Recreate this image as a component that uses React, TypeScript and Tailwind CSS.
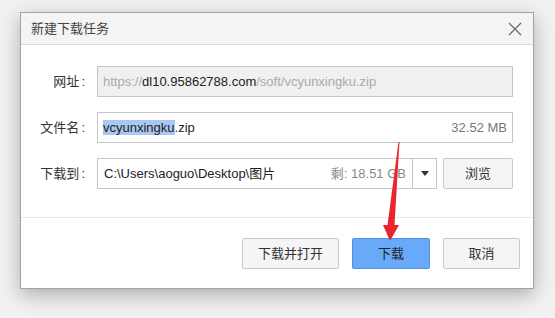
const font = { fontFamily: '"Liberation Sans", "Noto Sans CJK SC", sans-serif' };

const Label = ({ text }: { text: string }) => (
   <div className="w-[64px] text-right text-[13px] text-[#333] shrink-0">
      {text}
      <span className="ml-[2px]">:</span>
   </div>
);

const App = () => {
   return (
      <div className="w-[555px] h-[318px] bg-[#f1f1f1] pt-[12px] pl-[20px] relative overflow-hidden" style={font}>
         <div className="w-[514px] h-[277px] bg-white border border-[#a3a3a3] shadow-[0_6px_18px_rgba(0,0,0,0.28)] flex flex-col">
            <div className="h-[32px] bg-[#f4f4f4] border-b border-[#d8d8d8] flex items-center justify-between pl-[10px] pr-[10px]">
               <span className="text-[13px] text-[#444]">新建下载任务</span>
               <svg width="14" height="14" viewBox="0 0 14 14" className="mr-[1px]">
                  <path d="M1 1 L13 13 M13 1 L1 13" stroke="#666" strokeWidth="1.2" fill="none" />
               </svg>
            </div>

            <div className="flex flex-col gap-[15px] mt-[21px]">
               <div className="flex items-center h-[31px]">
                  <Label text="网址" />
                  <div className="ml-[12px] w-[416px] h-full bg-[#f0f0f0] border border-[#c6c6c6] flex items-center px-[5px] text-[13px] text-[#aaa] whitespace-nowrap">
                     https://<span className="text-[#222]">dl10.95862788.com</span>/soft/vcyunxingku.zip
                  </div>
               </div>
               <div className="flex items-center h-[31px]">
                  <Label text="文件名" />
                  <div className="ml-[12px] w-[416px] h-full bg-white border border-[#c6c6c6] flex items-center justify-between px-[5px] text-[13px] text-[#222]">
                     <span>
                        <span className="bg-[#a8c8f2]">vcyunxingku</span>.zip
                     </span>
                     <span className="text-[#777]">32.52 MB</span>
                  </div>
               </div>
               <div className="flex items-center h-[31px]">
                  <Label text="下载到" />
                  <div className="ml-[12px] w-[340px] h-full bg-white border border-[#c6c6c6] flex">
                     <div className="flex-1 flex items-center justify-between px-[6px] text-[13px] text-[#222]">
                        <span>C:\Users\aoguo\Desktop\图片</span>
                        <span className="text-[#888]">剩: 18.51 GB</span>
                     </div>
                     <div className="w-[24px] border-l border-[#c6c6c6] flex items-center justify-center">
                        <svg width="8" height="5" viewBox="0 0 8 5">
                           <path d="M0 0 L8 0 L4 5 Z" fill="#333" />
                        </svg>
                     </div>
                  </div>
                  <button className="ml-[6px] w-[70px] h-[31px] bg-[#f5f5f5] border border-[#cacaca] rounded-[2px] text-[13px] text-[#333]">浏览</button>
               </div>
            </div>

            <div className="mt-[28px] border-t border-[#e6e6e6]" />

            <div className="flex justify-end gap-[13px] mt-[20px] pr-[13px]">
               <button className="w-[97px] h-[31px] bg-[#f5f5f5] border border-[#c9c9c9] rounded-[2px] text-[13px] text-[#333]">下载并打开</button>
               <button className="w-[78px] h-[31px] bg-[#68a9f8] border border-[#4d92e6] rounded-[2px] text-[13px] text-[#222]">下载</button>
               <button className="w-[77px] h-[31px] bg-[#f5f5f5] border border-[#c9c9c9] rounded-[2px] text-[13px] text-[#333]">取消</button>
            </div>
         </div>

         <svg className="absolute left-0 top-0" width="555" height="318" viewBox="0 0 555 318">
            <path d="M398.5 142 L399.5 142 L394.5 225 L399 225 L390 241 L383 225 L387.5 225 Z" fill="#e8262b" />
         </svg>
      </div>
   );
};

export default App;
